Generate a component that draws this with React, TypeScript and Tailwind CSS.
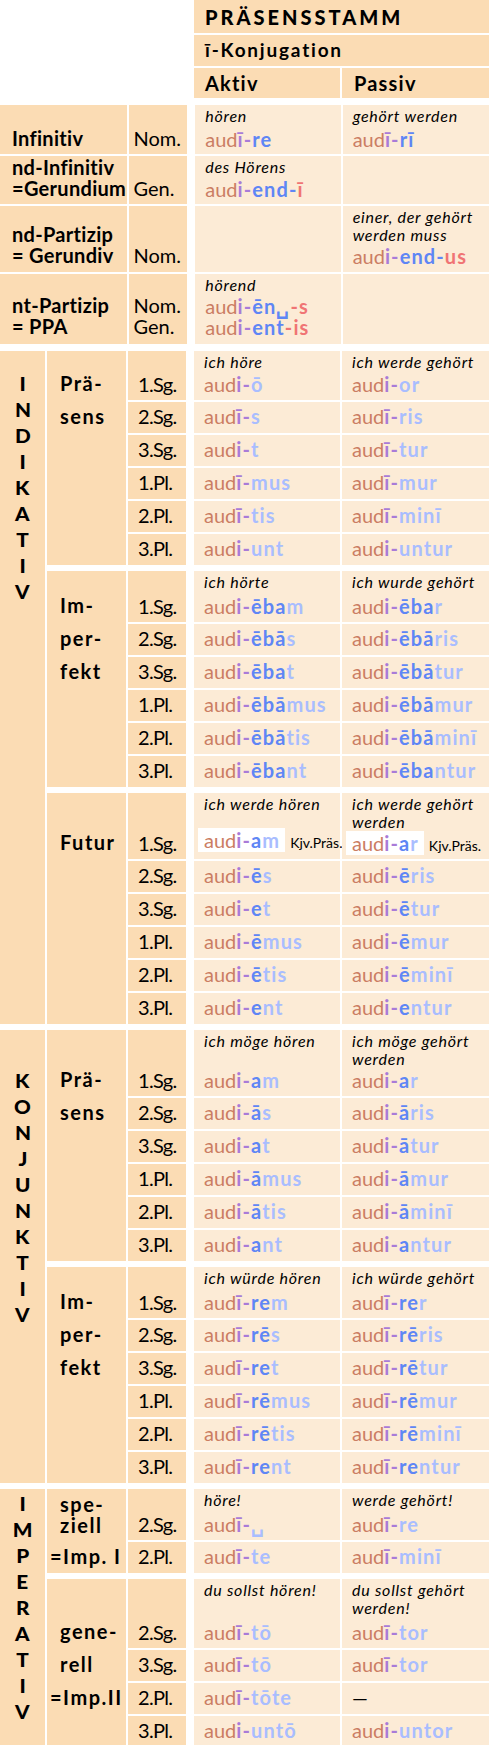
import React from "react";

const peach = "bg-[#fbdcb4]";
const cream = "bg-[#fcebd6]";

const tone: Record<string, string> = {
  d: "text-[#5f86f5]",
  l: "text-[#a9bdff]",
  r: "text-[#f07474]",
};

// "ī|dre|lm" -> aud + ī- + re + m
function Form({ f }: { f: string }) {
  if (f === "—") return <span className="text-black">—</span>;
  const [i, ...rest] = f.split("|");
  return (
    <span className="whitespace-nowrap">
      <span className="text-[#cb7d63]">aud</span>
      <span className="font-bold tracking-[1.1px]">
        <span className="text-[#a97bd8]">{i}-</span>
        {rest.map((s, k) => (
          <span key={k} className={tone[s[0]]}>
            {s.slice(1)}
          </span>
        ))}
      </span>
    </span>
  );
}

type Nom = { h: number; pb: number; label: string[]; cas: string[]; ga: string[]; a: string[]; gp: string[]; p: string[] };

const nominal: Nom[] = [
  { h: 49, pb: 5, label: ["Infinitiv"], cas: ["Nom."], ga: ["hören"], a: ["ī|dre"], gp: ["gehört werden"], p: ["ī|drī"] },
  { h: 48, pb: 5, label: ["nd-Infinitiv", "=Gerundium"], cas: ["Gen."], ga: ["des Hörens"], a: ["i|dend-|rī"], gp: [], p: [] },
  { h: 66, pb: 6, label: ["nd-Partizip", "= Gerundiv"], cas: ["Nom."], ga: [], a: [], gp: ["einer, der gehört", "werden muss"], p: ["i|dend-|rus"] },
  { h: 70, pb: 7, label: ["nt-Partizip", "= PPA"], cas: ["Nom.", "Gen."], ga: ["hörend"], a: ["i|dēn␣|r-s", "i|dent|r-is"], gp: [], p: [] },
];

type Group = { label: string[]; lpt: number; h1: number; ga: string[]; gp: string[]; kjv?: boolean; split?: boolean; rows: string[][] };
type Mood = { letters: string; pt: number; groups: Group[] };

const moods: Mood[] = [
  {
    letters: "INDIKATIV",
    pt: 20,
    groups: [
      {
        label: ["Prä-", "sens"], lpt: 16, h1: 49, ga: ["ich höre"], gp: ["ich werde gehört"],
        rows: [
          ["1.Sg.", "i|lō", "i|lor"],
          ["2.Sg.", "ī|ls", "ī|lris"],
          ["3.Sg.", "i|lt", "ī|ltur"],
          ["1.Pl.", "ī|lmus", "ī|lmur"],
          ["2.Pl.", "ī|ltis", "ī|lminī"],
          ["3.Pl.", "i|lunt", "i|luntur"],
        ],
      },
      {
        label: ["Im-", "per-", "fekt"], lpt: 18, h1: 51, ga: ["ich hörte"], gp: ["ich wurde gehört"],
        rows: [
          ["1.Sg.", "i|dēba|lm", "i|dēba|lr"],
          ["2.Sg.", "i|dēbā|ls", "i|dēbā|lris"],
          ["3.Sg.", "i|dēba|lt", "i|dēbā|ltur"],
          ["1.Pl.", "i|dēbā|lmus", "i|dēbā|lmur"],
          ["2.Pl.", "i|dēbā|ltis", "i|dēbā|lminī"],
          ["3.Pl.", "i|dēba|lnt", "i|dēba|lntur"],
        ],
      },
      {
        label: ["Futur"], lpt: 33, h1: 66, ga: ["ich werde hören"], gp: ["ich werde gehört", "werden"], kjv: true,
        rows: [
          ["1.Sg.", "i|da|lm", "i|da|lr"],
          ["2.Sg.", "i|dē|ls", "i|dē|lris"],
          ["3.Sg.", "i|de|lt", "i|dē|ltur"],
          ["1.Pl.", "i|dē|lmus", "i|dē|lmur"],
          ["2.Pl.", "i|dē|ltis", "i|dē|lminī"],
          ["3.Pl.", "i|de|lnt", "i|de|lntur"],
        ],
      },
    ],
  },
  {
    letters: "KONJUNKTIV",
    pt: 38,
    groups: [
      {
        label: ["Prä-", "sens"], lpt: 33, h1: 66, ga: ["ich möge hören"], gp: ["ich möge gehört", "werden"],
        rows: [
          ["1.Sg.", "i|da|lm", "i|da|lr"],
          ["2.Sg.", "i|dā|ls", "i|dā|lris"],
          ["3.Sg.", "i|da|lt", "i|dā|ltur"],
          ["1.Pl.", "i|dā|lmus", "i|dā|lmur"],
          ["2.Pl.", "i|dā|ltis", "i|dā|lminī"],
          ["3.Pl.", "i|da|lnt", "i|da|lntur"],
        ],
      },
      {
        label: ["Im-", "per-", "fekt"], lpt: 18, h1: 51, ga: ["ich würde hören"], gp: ["ich würde gehört"],
        rows: [
          ["1.Sg.", "ī|dre|lm", "ī|dre|lr"],
          ["2.Sg.", "ī|drē|ls", "ī|drē|lris"],
          ["3.Sg.", "ī|dre|lt", "ī|drē|ltur"],
          ["1.Pl.", "ī|drē|lmus", "ī|drē|lmur"],
          ["2.Pl.", "ī|drē|ltis", "ī|drē|lminī"],
          ["3.Pl.", "ī|dre|lnt", "ī|dre|lntur"],
        ],
      },
    ],
  },
  {
    letters: "IMPERATIV",
    pt: 2,
    groups: [
      {
        label: ["spe-", "ziell", "=Imp. I"], lpt: 5, h1: 51, split: true, ga: ["höre!"], gp: ["werde gehört!"],
        rows: [
          ["2.Sg.", "ī|l␣", "ī|lre"],
          ["2.Pl.", "ī|lte", "ī|lminī"],
        ],
      },
      {
        label: ["gene-", "rell", "=Imp.II"], lpt: 36, h1: 69, ga: ["du sollst hören!"], gp: ["du sollst gehört", "werden!"],
        rows: [
          ["2.Sg.", "ī|ltō", "ī|ltor"],
          ["3.Sg.", "ī|ltō", "ī|ltor"],
          ["2.Pl.", "ī|ltōte", "—"],
          ["3.Pl.", "i|luntō", "i|luntor"],
        ],
      },
    ],
  },
];

const Gloss = ({ lines }: { lines: string[] }) => (
  <div className="italic text-[16px] leading-[18px] tracking-[0.75px] text-black">
    {lines.map((l) => (
      <div key={l}>{l}</div>
    ))}
  </div>
);

function Cell({ w, gloss, form, first, kjv }: { w: string; gloss: string[]; form: string; first: boolean; kjv?: boolean }) {
  return (
    <div className={`${w} ${cream} flex flex-col ${first ? "justify-between pt-[2px] pb-[4px]" : "justify-end pb-[5px]"} pl-[10px]`}>
      {first && <Gloss lines={gloss} />}
      <div className="text-[20px] leading-[24px]">
        {kjv ? (
          <>
            <span className="bg-white pl-[6px] pr-[5px] -ml-[6px]">
              <Form f={form} />
            </span>
            <span className="ml-[5px] text-[14px] text-black">Kjv.Präs.</span>
          </>
        ) : (
          <Form f={form} />
        )}
      </div>
    </div>
  );
}

const labelPad = (l: string) => (l.startsWith("=") ? "pl-[3px]" : "pl-[13px]");

function GroupBlock({ g }: { g: Group }) {
  return (
    <div className="flex gap-[2px]">
      {g.split ? (
        <div className={`w-[79px] ${peach} font-bold text-[20px] tracking-[1.5px] flex flex-col justify-between pb-[5px]`} style={{ paddingTop: g.lpt }}>
          <div className="leading-[21px]">
            <div className={labelPad(g.label[0])}>{g.label[0]}</div>
            <div className={labelPad(g.label[1])}>{g.label[1]}</div>
          </div>
          <div className={`leading-[24px] ${labelPad(g.label[2])}`}>{g.label[2]}</div>
        </div>
      ) : (
        <div className={`w-[79px] ${peach} font-bold text-[20px] tracking-[1.5px] leading-[33px]`} style={{ paddingTop: g.lpt }}>
          {g.label.map((l, i) => (
            <div key={i} className={labelPad(l)}>
              {l}
            </div>
          ))}
        </div>
      )}
      <div className="flex flex-col gap-[2px]">
        {g.rows.map((r, i) => {
          const first = i === 0;
          return (
            <div key={i} className={`flex gap-[2px] ${first ? "" : "h-[31px]"}`} style={first ? { height: g.h1 } : undefined}>
              <div className={`w-[58px] ${peach} flex flex-col justify-end ${first ? "pb-[4px]" : "pb-[5px]"} pl-[10px] text-[20px] leading-[24px] tracking-[-0.7px]`}>
                {r[0]}
              </div>
              <div className="w-[4px]" />
              <Cell w="w-[146px]" gloss={g.ga} form={r[1]} first={first} kjv={first && g.kjv} />
              <Cell w="w-[147px]" gloss={g.gp} form={r[2]} first={first} kjv={first && g.kjv} />
            </div>
          );
        })}
      </div>
    </div>
  );
}

export default function App() {
  return (
    <div className="w-[489px] bg-white text-black font-['Lato',sans-serif] [font-variant-ligatures:none] flex flex-col">
      {/* head */}
      <div className="flex flex-col gap-[2px] pl-[194px]">
        <div className={`h-[33px] ${peach} pl-[11px] flex items-center text-[20px] font-black tracking-[3px]`}>PRÄSENSSTAMM</div>
        <div className={`h-[31px] ${peach} pl-[11px] flex items-center text-[19px] font-bold tracking-[1.8px]`}>ī-Konjugation</div>
        <div className="h-[30px] flex gap-[2px] text-[20px] font-bold tracking-[1.2px]">
          <div className={`w-[146px] ${peach} pl-[11px] flex items-center`}>Aktiv</div>
          <div className={`w-[147px] ${peach} pl-[12px] flex items-center`}>Passiv</div>
        </div>
      </div>

      {/* nominal forms */}
      <div className="mt-[7px] flex flex-col gap-[2px]">
        {nominal.map((n, i) => (
          <div key={i} className="flex gap-[2px] leading-[21px]" style={{ height: n.h }}>
            <div className={`w-[128px] ${peach} flex flex-col justify-end pl-[12px] font-bold text-[20px] tracking-[0.3px]`} style={{ paddingBottom: n.pb }}>
              {n.label.map((l) => (
                <div key={l}>{l}</div>
              ))}
            </div>
            <div className={`w-[58px] ${peach} flex flex-col justify-end pl-[4px] text-[20px]`} style={{ paddingBottom: n.pb }}>
              {n.cas.map((l) => (
                <div key={l}>{l}</div>
              ))}
            </div>
            <div className="w-[4px]" />
            {[
              { w: "w-[146px]", g: n.ga, f: n.a },
              { w: "w-[147px]", g: n.gp, f: n.p },
            ].map((c, k) => (
              <div key={k} className={`${c.w} ${cream} flex flex-col justify-between pt-[2px] pl-[10px]`} style={{ paddingBottom: n.pb - 1 }}>
                <Gloss lines={c.g} />
                <div className="text-[20px]">
                  {c.f.map((f) => (
                    <div key={f}>
                      <Form f={f} />
                    </div>
                  ))}
                </div>
              </div>
            ))}
          </div>
        ))}
      </div>

      {/* finite forms */}
      <div className="mt-[7px] flex flex-col gap-[6px]">
        {moods.map((m) => (
          <div key={m.letters} className="flex gap-[2px]">
            <div className={`w-[47px] ${peach} flex flex-col items-center font-black text-[18px] leading-[26px]`} style={{ paddingTop: m.pt }}>
              {m.letters.split("").map((ch, i) => (
                <div key={i} className="scale-x-[1.15]">
                  {ch}
                </div>
              ))}
            </div>
            <div className="flex flex-col gap-[6px]">
              {m.groups.map((g, i) => (
                <GroupBlock key={i} g={g} />
              ))}
            </div>
          </div>
        ))}
      </div>
    </div>
  );
}
